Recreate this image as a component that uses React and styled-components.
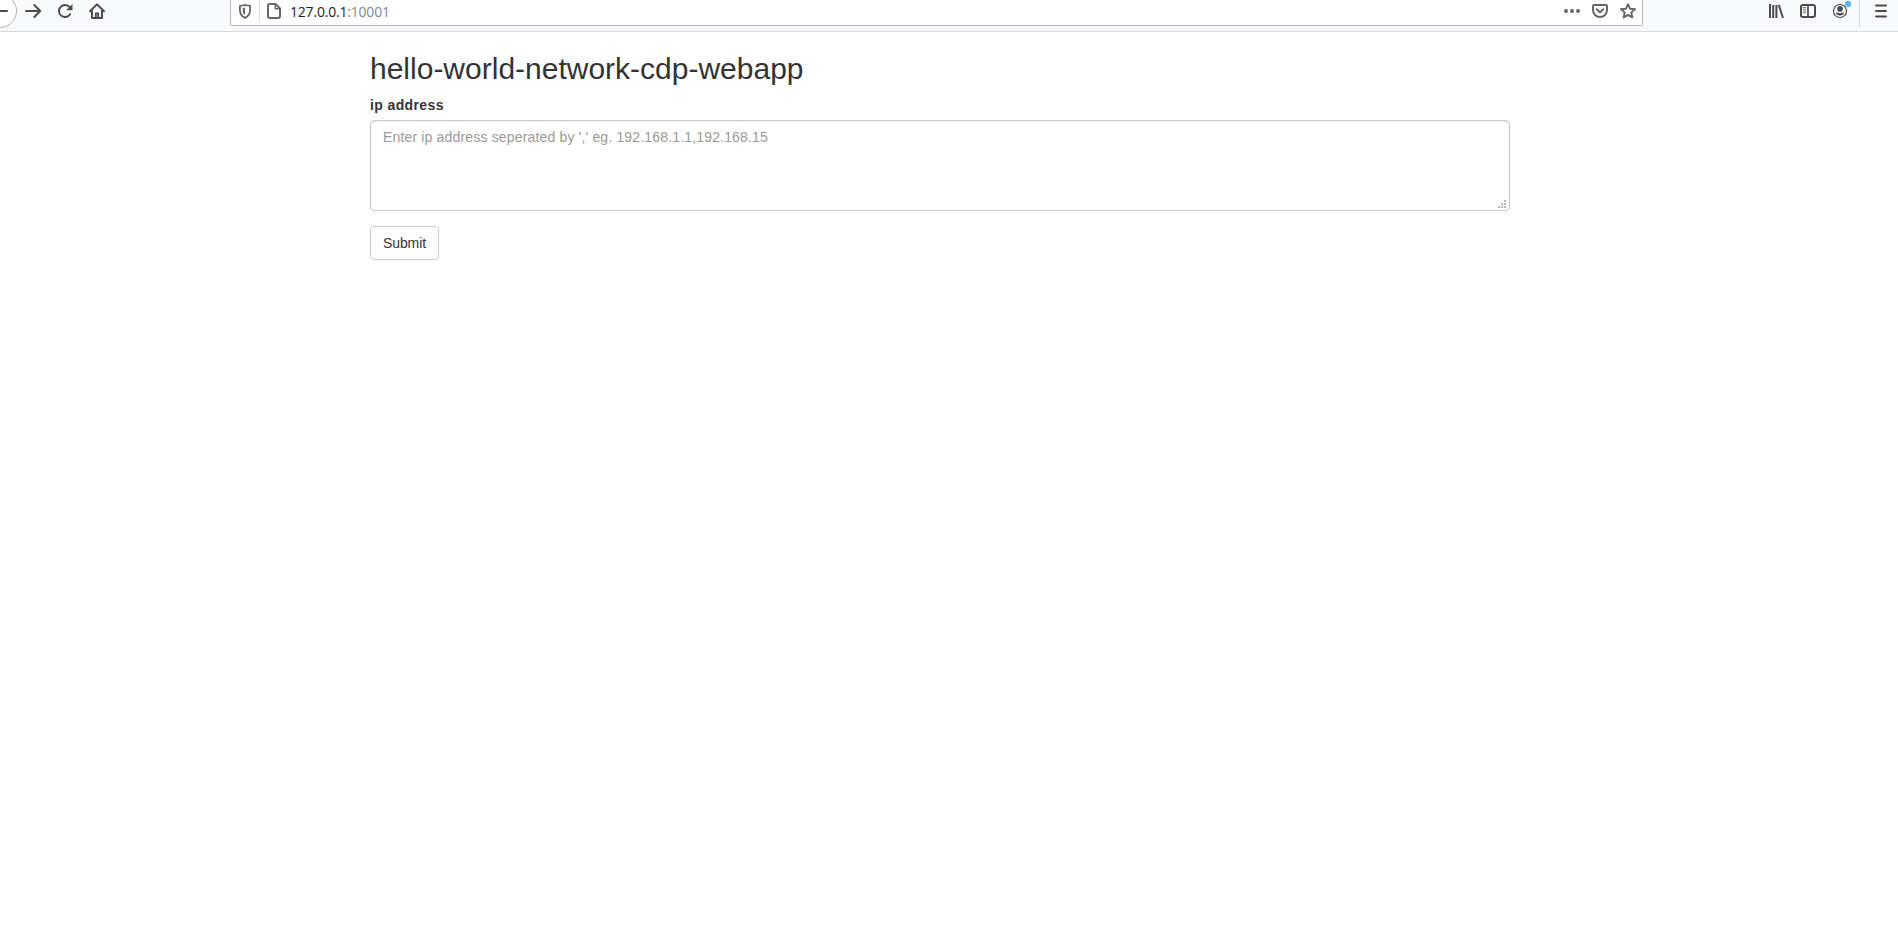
import React from "react";
import styled, { createGlobalStyle } from "styled-components";

const GlobalStyle = createGlobalStyle`
  *, *::before, *::after { box-sizing: border-box; }
  body {
    margin: 0;
    background: #fff;
    color: #333;
    font: 14px/20px "Liberation Sans", Arial, sans-serif;
    overflow: hidden;
  }
`;

const Toolbar = styled.header`
  display: flex;
  align-items: flex-start;
  height: 32px;
  background: #f9fafb;
  border-bottom: 1px solid #dbdcdf;
  overflow: hidden;
`;

const NavGroup = styled.nav`
  display: flex;
  flex: none;
  width: 230px;
`;

const ToolGroup = styled.div`
  display: flex;
  flex: none;
  margin-left: 117px;
`;

const IconButton = styled.button`
  display: flex;
  align-items: center;
  justify-content: center;
  flex: none;
  width: ${(p) => p.$width || 32}px;
  height: 22px;
  padding: 0;
  border: 0;
  background: none;
  color: ${(p) => p.$color || "#4c4a4d"};
`;

const BackButton = styled(IconButton)`
  width: 34px;
  height: 34px;
  margin: -6px 0 0 -17px;
  border: 1px solid #b4b4b6;
  border-radius: 50%;
  background: #fff;
`;

const Glyph = styled.svg`
  display: block;
  width: 16px;
  height: 16px;
  overflow: visible;
  fill: none;
  stroke: currentColor;
  stroke-width: 2;
  stroke-linecap: round;
  stroke-linejoin: round;
`;

const AddressBar = styled.div`
  display: flex;
  flex: none;
  width: 1413px;
  height: 26px;
  background: #fff;
  border: 1px solid #b9b9bb;
  border-top: 0;
  border-radius: 0 0 2px 2px;
`;

const Divider = styled.span`
  flex: none;
  width: 1px;
  height: ${(p) => p.$height}px;
  background: #dcdcde;
`;

const Url = styled.span`
  flex: 1;
  padding: 1px 0 0 2px;
  font: 14px/22px "Open Sans", "Noto Sans", sans-serif;
  letter-spacing: -0.2px;
  color: #222;
`;

const Port = styled.span`
  color: #85878a;
`;

const Container = styled.main`
  width: 1140px;
  margin: 20px auto 0 370px;
`;

const Title = styled.h2`
  margin: 0 0 10px;
  font-size: 30px;
  font-weight: 400;
  line-height: 33px;
`;

const Label = styled.label`
  display: block;
  margin-bottom: 5px;
  font-weight: 700;
  letter-spacing: 0.38px;
`;

const Field = styled.div`
  position: relative;
  height: 91px;
  margin-bottom: 15px;
`;

const TextArea = styled.textarea`
  display: block;
  width: 100%;
  height: 100%;
  padding: 6px 12px;
  border: 1px solid #ccc;
  border-radius: 4px;
  box-shadow: inset 0 1px 1px rgba(0, 0, 0, 0.075);
  font: inherit;
  letter-spacing: 0.165px;
  color: #555;
  resize: none;
  &::placeholder { color: #999; opacity: 1; }
`;

const Grip = styled.svg`
  position: absolute;
  right: 4px;
  bottom: 3px;
  width: 8px;
  height: 8px;
  fill: #b5b5b5;
`;

const Submit = styled.button`
  width: 69px;
  height: 34px;
  padding: 6px 0;
  border: 1px solid #ccc;
  border-radius: 4px;
  background: #fff;
  font: inherit;
  letter-spacing: -0.1px;
  color: #333;
`;

const Icon = ({ children }) => <Glyph viewBox="0 0 16 16" aria-hidden="true">{children}</Glyph>;

export default function App() {
  return (
    <>
      <GlobalStyle />
      <Toolbar>
        <NavGroup>
          <BackButton aria-label="Back">
            <Icon><path d="M1 8h14M7 2 1 8l6 6" /></Icon>
          </BackButton>
          <IconButton aria-label="Forward">
            <Icon><path d="M1 8h14M9.3 2l5.9 6-5.9 6" /></Icon>
          </IconButton>
          <IconButton aria-label="Reload">
            <Icon>
              <path d="M13.1 11.2A6 6 0 1 1 12.6 4.2" />
              <path d="M15.500 1v6.300H9.200z" fill="currentColor" stroke="none" />
            </Icon>
          </IconButton>
          <IconButton aria-label="Home">
            <Icon>
              <path d="M1 8.2 8 1.4l7 6.8M3 8v7h10V8" />
              <path d="M6.800 15v-4.700h2.400V15" strokeWidth="1.8" />
            </Icon>
          </IconButton>
        </NavGroup>
        <AddressBar>
          <IconButton $width={28} $color="#676568" aria-label="Tracking protection">
            <Icon>
              <path d="M8 1.7c1.7.8 3.4 1.1 5.1 1.2v3.9c0 4.3-2.2 6.9-5.1 8.1-2.9-1.2-5.1-3.8-5.1-8.1V2.9C4.6 2.8 6.3 2.5 8 1.7z" strokeWidth="1.8" />
              <path d="M8 4.4v7.7C6.4 11 5.7 9.1 5.7 7V5z" fill="currentColor" stroke="none" />
            </Icon>
          </IconButton>
          <Divider $height={22} />
          <IconButton $width={28} $color="#676568" aria-label="Site information">
            <Icon>
              <path d="M4 1h5.500L14 5.500V13a2 2 0 0 1-2 2H4a2 2 0 0 1-2-2V3a2 2 0 0 1 2-2z" />
              <path d="M9.200 1.500v4.300h4.300" strokeWidth="1.400" />
            </Icon>
          </IconButton>
          <Url>127.0.0.1<Port>:10001</Port></Url>
          <IconButton $width={28} $color="#676568" aria-label="Page actions">
            <Icon><g fill="currentColor" stroke="none"><circle cx="2" cy="8" r="2" /><circle cx="8" cy="8" r="2" /><circle cx="14" cy="8" r="2" /></g></Icon>
          </IconButton>
          <IconButton $width={28} $color="#676568" aria-label="Save to Pocket">
            <Icon>
              <path d="M2.200 2h11.600q1.200 0 1.200 1.200V7a7 7 0 0 1-14 0V3.200Q1 2 2.200 2z" />
              <path d="M4.700 6.300 8 9.500l3.300-3.200" />
            </Icon>
          </IconButton>
          <IconButton $width={28} $color="#676568" aria-label="Bookmark">
            <Icon><path d="m8 1.200 2 4.500 5 .5-3.700 3.300 1 4.900L8 11.900l-4.300 2.500 1-4.900L1 6.200l5-.5z" strokeWidth="1.900" /></Icon>
          </IconButton>
        </AddressBar>
        <ToolGroup>
          <IconButton aria-label="Library">
            <Icon><path d="M2 1v14M5.200 2v13M8.400 2v13M10.800 2l4.200 13" strokeLinecap="butt" /></Icon>
          </IconButton>
          <IconButton aria-label="Sidebars">
            <Icon>
              <rect x="1" y="2" width="14" height="12" rx="2" />
              <path d="M8 2v12" strokeWidth="1.700" />
              <path d="M3.500 4.700h2M3.500 7h2M3.500 9.300h2" strokeWidth="1" />
            </Icon>
          </IconButton>
          <IconButton aria-label="Account">
            <Icon>
              <circle cx="8" cy="8" r="6.500" strokeWidth="1.200" />
              <circle cx="8" cy="5.900" r="2.800" fill="currentColor" stroke="none" />
              <path d="M4 9.300c1.300 0 1.700 1 4 1s2.700-1 4-1c.3 1.900-1.600 3.200-4 3.200s-4.300-1.300-4-3.200z" fill="currentColor" stroke="none" />
              <circle cx="16" cy="1" r="3.200" fill="#61b5fa" stroke="none" />
            </Icon>
          </IconButton>
          <IconButton as="span" $width={3} />
          <Divider $height={28} />
          <IconButton $width={42} aria-label="Menu">
            <Icon><path d="M3 2.500h10M3 8h10M3 13.500h10" /></Icon>
          </IconButton>
        </ToolGroup>
      </Toolbar>
      <Container>
        <Title>hello-world-network-cdp-webapp</Title>
        <Label htmlFor="ip">ip address</Label>
        <Field>
          <TextArea id="ip" placeholder="Enter ip address seperated by ',' eg. 192.168.1.1,192.168.15" />
          <Grip viewBox="0 0 8 8">
            <path d="M6 0h2v2H6zM3 3h2v2H3zM6 3h2v2H6zM0 6h2v2H0zM3 6h2v2H3zM6 6h2v2H6z" />
          </Grip>
        </Field>
        <Submit>Submit</Submit>
      </Container>
    </>
  );
}
